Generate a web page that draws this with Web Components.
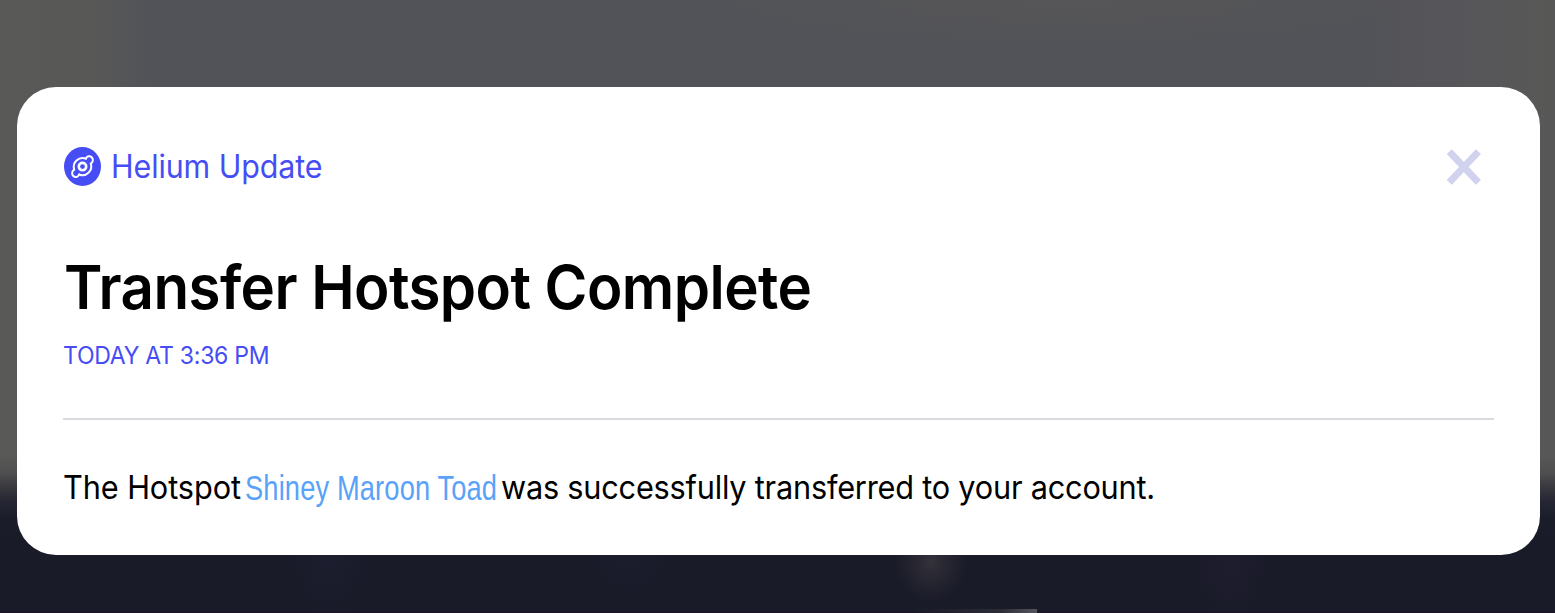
<!DOCTYPE html>
<html lang="en"><head><meta charset="utf-8"><title>Helium Update</title>
<style>html,body{margin:0;height:100%;overflow:hidden}body{font-family:Inter,"Liberation Sans",sans-serif}</style></head>
<body>
<notification-screen>
  <notification-card>
    <update-brand slot="brand"></update-brand>
    <close-button slot="close"></close-button>
    <fit-text slot="title" width="744" size="61" weight="600" line="74" stretch=".955">Transfer Hotspot Complete</fit-text>
    <fit-text slot="time" width="204" size="24" line="30" stretch=".96" style="color:#474df5">TODAY AT 3:36 PM</fit-text>
    <transfer-message slot="message"></transfer-message>
  </notification-card>
</notification-screen>
<script>
// Single line of text whose tracking is set so that its ink spans the given width.
customElements.define('fit-text', class extends HTMLElement {
  connectedCallback() {
    const a = (n, d) => this.getAttribute(n) || d;
    const family = a('family', 'Inter'), size = +a('size', 32), weight = a('weight', 400);
    const width = +a('width', 100), sx = +a('stretch', 1), text = this.textContent;
    const ctx = document.createElement('canvas').getContext('2d');
    ctx.font = `${weight} ${size}px "${family}"`;
    const m = ctx.measureText(text);
    const ink = m.actualBoundingBoxLeft + m.actualBoundingBoxRight;
    const tracking = (width / sx - ink) / (text.length - 1);
    this.attachShadow({mode: 'open'}).innerHTML = `<style>
      :host{display:block;width:${width}px;height:${a('line', 40)}px;line-height:${a('line', 40)}px;white-space:nowrap}
      span{display:inline-block;font-family:"${family}",sans-serif;font-size:${size}px;font-weight:${weight};
      letter-spacing:${tracking}px;transform-origin:0 50%;transform:scaleX(${sx});margin-left:${m.actualBoundingBoxLeft * sx}px}
      </style><span><slot></slot></span>`;
  }
});
customElements.define('update-brand', class extends HTMLElement {
  connectedCallback() {
    this.attachShadow({mode: 'open'}).innerHTML = `<style>
      :host{display:flex;align-items:center;gap:12px;color:#474df5}svg{display:block}</style>
      <svg width="37" height="39" viewBox="0 0 37 39" preserveAspectRatio="none">
        <ellipse cx="18.5" cy="19.5" rx="18.5" ry="19.5" fill="#474df5"/>
        <g fill="none" stroke="#fff" stroke-width="2" stroke-linecap="round" stroke-linejoin="round">
          <circle cx="18.5" cy="19.6" r="3.7" stroke-width="2.6"/>
          <path d="M21.9 11.7A8.8 8.8 0 0 0 10.2 22.6"/>
          <path d="M15.1 27.5A8.8 8.8 0 0 0 26.8 16.6"/>
          <path d="M21.9 11.7A3.6 3.9 0 1 1 26.8 16.6"/>
          <path d="M15.1 27.5A3.6 3.9 0 1 1 10.2 22.6"/>
        </g>
      </svg>
      <fit-text width="209" size="32" line="39" stretch=".95" weight="400">Helium Update</fit-text>`;
  }
});
customElements.define('close-button', class extends HTMLElement {
  connectedCallback() {
    this.attachShadow({mode: 'open'}).innerHTML = `<style>:host{display:block}svg{display:block}</style>
      <svg width="35" height="36" viewBox="0 0 35 36"><path d="M3.3 2.6 32.4 33.4M32.4 2.6 3.3 33.4" stroke="#d0d2ee" stroke-width="7"/></svg>`;
  }
});
customElements.define('transfer-message', class extends HTMLElement {
  connectedCallback() {
    this.attachShadow({mode: 'open'}).innerHTML = `<style>:host{display:flex}.link{color:#59a2f8;margin:-.5px 6px 0 5px}</style>
      <fit-text width="176.5" size="32.3" line="40" stretch=".95">The Hotspot</fit-text>
      <fit-text class="link" family="Liberation Sans" width="250" size="34.5" line="40" stretch=".79">Shiney Maroon Toad</fit-text>
      <fit-text width="651" size="32.3" line="40" stretch=".95">was successfully transferred to your account.</fit-text>`;
  }
});
customElements.define('notification-card', class extends HTMLElement {
  connectedCallback() {
    this.attachShadow({mode: 'open'}).innerHTML = `<style>
      :host{display:flex;flex-direction:column;box-sizing:border-box;width:1522.5px;height:468px;border-radius:39px;background:#fff;padding:60px 46px 0 46px;color:#000}
      header{display:flex;justify-content:space-between;height:39px;padding:0 13px 0 1px;align-items:center}
      .title{margin-top:64px;padding-left:2.5px}.time{margin-top:17px;padding-left:.5px}
      hr{width:100%;height:2px;border:0;margin:47px 0 48px;background:#d9dadd}
      .message{padding-left:1px}
      </style>
      <header><slot name="brand"></slot><slot name="close"></slot></header>
      <div class="title"><slot name="title"></slot></div>
      <div class="time"><slot name="time"></slot></div>
      <hr><div class="message"><slot name="message"></slot></div>`;
  }
});
customElements.define('notification-screen', class extends HTMLElement {
  connectedCallback() {
    this.attachShadow({mode: 'open'}).innerHTML = `<style>
      :host{display:block;box-sizing:border-box;width:1555px;height:613px;padding:87px 0 0 17.3px;overflow:hidden;
      background:
        linear-gradient(90deg,transparent,#2c2c36 70%,#55555e) 915px 609px/122px 4px no-repeat,
        linear-gradient(#1b1325,#1b1325) 0 612px/100% 1px no-repeat,
        radial-gradient(ellipse 36px 40px at 931px 562px,#34323a,#34323a88 40%,#1a1b2900),
        radial-gradient(ellipse 36px 50px at 1230px 566px,#1e1d2f,#1a1b2900),
        radial-gradient(ellipse 42px 58px at 329px 558px,#1c1d2e,#1a1b2900),
        radial-gradient(ellipse 42px 45px at 630px 555px,#1b1d2d,#1a1b2900),
        linear-gradient(#4f4f5000 455px,#4f4f50 473px,#38383e 487px,#252633 502px,#1c1d2b 518px,#1a1b29 540px),
        radial-gradient(ellipse 380px 45px at 1070px 0,#565657,#56565700) 0 0/100% 60px no-repeat,
        linear-gradient(90deg,#595957,#585956 90px,#525358 150px,#525358 1370px,#56555a 1440px,#585857 1540px,#575757)}
      </style><slot></slot>`;
  }
});
</script>
</body></html>
